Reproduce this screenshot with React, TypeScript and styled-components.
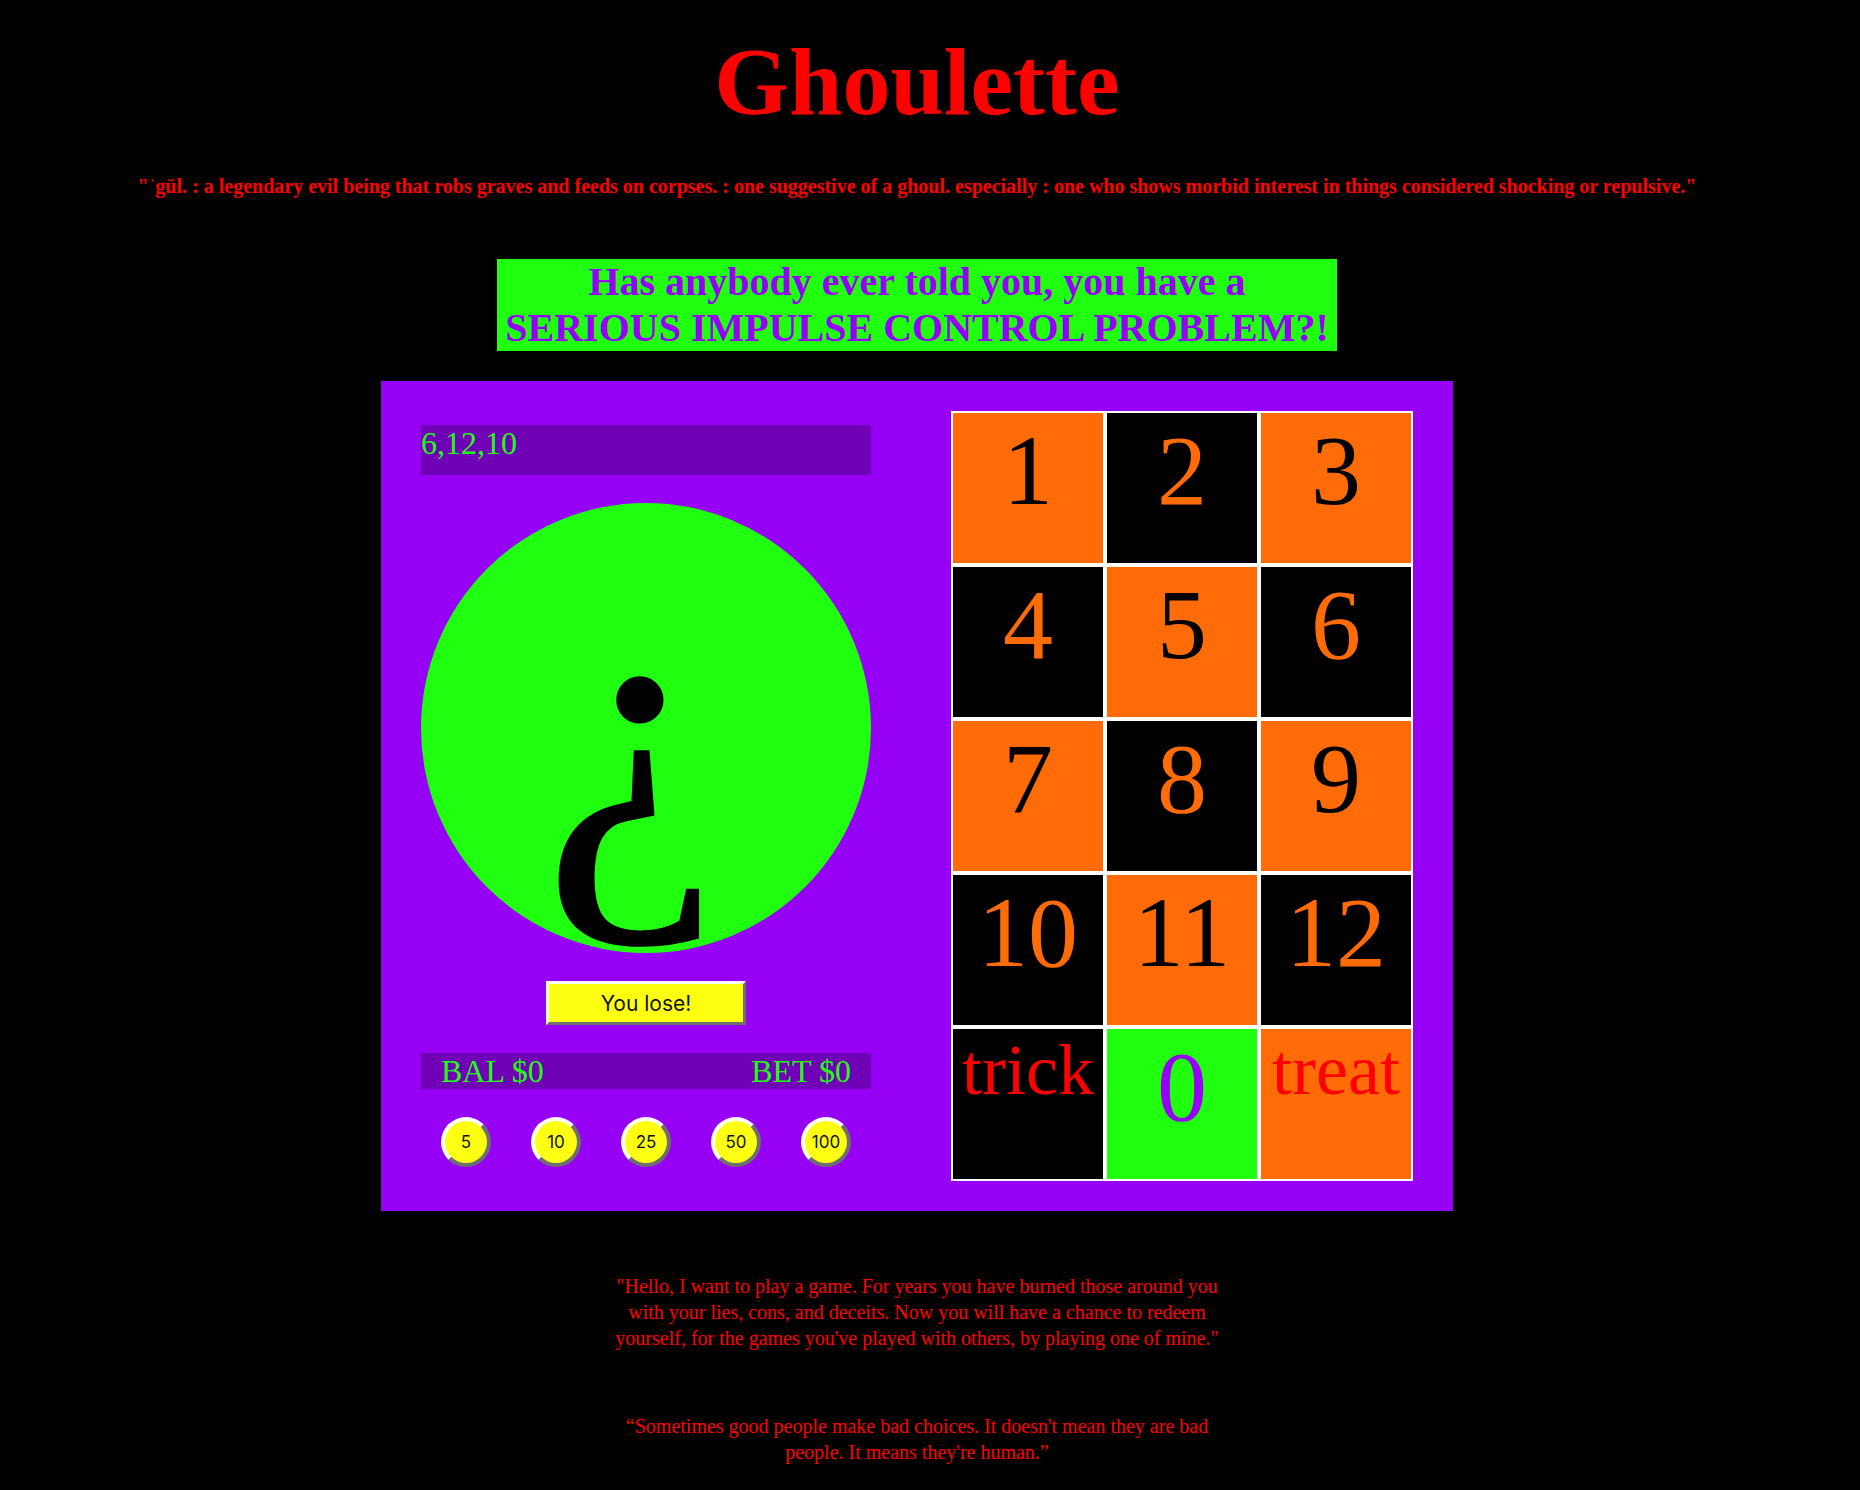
import React from "react";
import styled, { createGlobalStyle } from "styled-components";

const GREEN = "#1fff0f";
const PURPLE = "#9600f5";
const DARK_PURPLE = "#7000b6";
const ORANGE = "#ff6b06";
const RED = "#ff0000";
const YELLOW = "#ffff12";

const GlobalStyle = createGlobalStyle`
  html, body {
    margin: 0;
    padding: 0;
    background: #000;
  }
  body {
    font-family: "Liberation Serif", "Times New Roman", serif;
  }
`;

const Page = styled.div`
  width: 1834px;
  display: flex;
  flex-direction: column;
  align-items: center;
  padding-top: 27px;
  padding-bottom: 24px;
  text-align: center;
`;

const Title = styled.h1`
  margin: 0;
  font-size: 96px;
  line-height: 110px;
  font-weight: bold;
  color: ${RED};
`;

const Definition = styled.h3`
  margin: 38px 0 0;
  font-size: 20px;
  line-height: 23px;
  font-weight: bold;
  color: ${RED};
  white-space: nowrap;
`;

const Banner = styled.h2`
  margin: 61px 0 0;
  width: 840px;
  background: ${GREEN};
  color: ${PURPLE};
  font-size: 40px;
  line-height: 46px;
  font-weight: bold;
`;

const Table = styled.section`
  margin-top: 30px;
  width: 1072px;
  height: 830px;
  box-sizing: border-box;
  background: ${PURPLE};
  padding: 30px 40px;
  display: flex;
  gap: 80px;
  align-items: flex-start;
`;

const LeftCol = styled.div`
  width: 450px;
  padding-top: 14px;
  display: flex;
  flex-direction: column;
  align-items: center;
  gap: 28px;
`;

const Result = styled.div`
  width: 100%;
  height: 50px;
  background: ${DARK_PURPLE};
  color: ${GREEN};
  font-size: 32px;
  line-height: 37px;
  text-align: left;
`;

const Wheel = styled.div`
  width: 450px;
  height: 450px;
  border-radius: 50%;
  background: ${GREEN};
  overflow: hidden;
  display: flex;
  justify-content: center;
`;

const Glyph = styled.div`
  margin-top: 27px;
  margin-right: 30px;
  font-size: 400px;
  line-height: 400px;
  color: #000;
`;

const SpinButton = styled.button`
  width: 200px;
  height: 44px;
  box-sizing: border-box;
  background: ${YELLOW};
  border: 3px solid;
  border-color: #ffffff #707070 #707070 #ffffff;
  font-family: Inter, "Liberation Sans", Arial, sans-serif;
  font-size: 21px;
  color: #111;
  padding: 0;
  cursor: pointer;
`;

const Stats = styled.div`
  width: 100%;
  height: 36px;
  box-sizing: border-box;
  padding: 0 20px;
  background: ${DARK_PURPLE};
  color: ${GREEN};
  font-size: 32px;
  line-height: 36px;
  display: flex;
  justify-content: space-between;
`;

const Chips = styled.div`
  width: 100%;
  box-sizing: border-box;
  padding: 0 20px;
  display: flex;
  justify-content: space-between;
`;

const Chip = styled.button`
  width: 50px;
  height: 50px;
  box-sizing: border-box;
  border-radius: 50%;
  border: 4px solid;
  border-color: #ffffff #6e6e6e #6e6e6e #ffffff;
  background: ${YELLOW};
  font-family: Inter, "Liberation Sans", Arial, sans-serif;
  font-size: 17px;
  color: #111;
  padding: 0;
  display: flex;
  align-items: center;
  justify-content: center;
  cursor: pointer;
`;

const Board = styled.div`
  display: grid;
  grid-template-columns: repeat(3, 154px);
  grid-auto-rows: 154px;
`;

type CellProps = { $bg: string; $fg: string; $small?: boolean };

const Cell = styled.div<CellProps>`
  box-sizing: border-box;
  border: 2px solid #fff;
  background: ${(p) => p.$bg};
  color: ${(p) => p.$fg};
  font-size: ${(p) => (p.$small ? "72px" : "100px")};
  line-height: ${(p) => (p.$small ? "83px" : "115px")};
  text-align: center;
  overflow: hidden;
`;

const Quote = styled.p<{ $gap: number }>`
  margin: ${(p) => p.$gap}px 0 0;
  width: 620px;
  color: ${RED};
  font-size: 20px;
  line-height: 26px;
`;

const cells: { label: string; bg: string; fg: string; small?: boolean }[] = [
  { label: "1", bg: ORANGE, fg: "#000" },
  { label: "2", bg: "#000", fg: ORANGE },
  { label: "3", bg: ORANGE, fg: "#000" },
  { label: "4", bg: "#000", fg: ORANGE },
  { label: "5", bg: ORANGE, fg: "#000" },
  { label: "6", bg: "#000", fg: ORANGE },
  { label: "7", bg: ORANGE, fg: "#000" },
  { label: "8", bg: "#000", fg: ORANGE },
  { label: "9", bg: ORANGE, fg: "#000" },
  { label: "10", bg: "#000", fg: ORANGE },
  { label: "11", bg: ORANGE, fg: "#000" },
  { label: "12", bg: "#000", fg: ORANGE },
  { label: "trick", bg: "#000", fg: RED, small: true },
  { label: "0", bg: GREEN, fg: PURPLE },
  { label: "treat", bg: ORANGE, fg: RED, small: true },
];

const chips = [5, 10, 25, 50, 100];

export default function App() {
  return (
    <>
      <GlobalStyle />
      <Page>
        <Title>Ghoulette</Title>
        <Definition>
          "ˈgül. : a legendary evil being that robs graves and feeds on corpses. : one suggestive of a
          ghoul. especially : one who shows morbid interest in things considered shocking or repulsive."
        </Definition>
        <Banner>
          Has anybody ever told you, you have a
          <br />
          SERIOUS IMPULSE CONTROL PROBLEM?!
        </Banner>
        <Table>
          <LeftCol>
            <Result>6,12,10</Result>
            <Wheel>
              <Glyph>¿</Glyph>
            </Wheel>
            <SpinButton>You lose!</SpinButton>
            <Stats>
              <span>BAL $0</span>
              <span>BET $0</span>
            </Stats>
            <Chips>
              {chips.map((c) => (
                <Chip key={c}>{c}</Chip>
              ))}
            </Chips>
          </LeftCol>
          <Board>
            {cells.map((c) => (
              <Cell key={c.label} $bg={c.bg} $fg={c.fg} $small={c.small}>
                {c.label}
              </Cell>
            ))}
          </Board>
        </Table>
        <Quote $gap={62}>
          "Hello, I want to play a game. For years you have burned those around you with your lies,
          cons, and deceits. Now you will have a chance to redeem yourself, for the games you've
          played with others, by playing one of mine."
        </Quote>
        <Quote $gap={62}>
          “Sometimes good people make bad choices. It doesn't mean they are bad people. It means
          they're human.”
        </Quote>
      </Page>
    </>
  );
}
